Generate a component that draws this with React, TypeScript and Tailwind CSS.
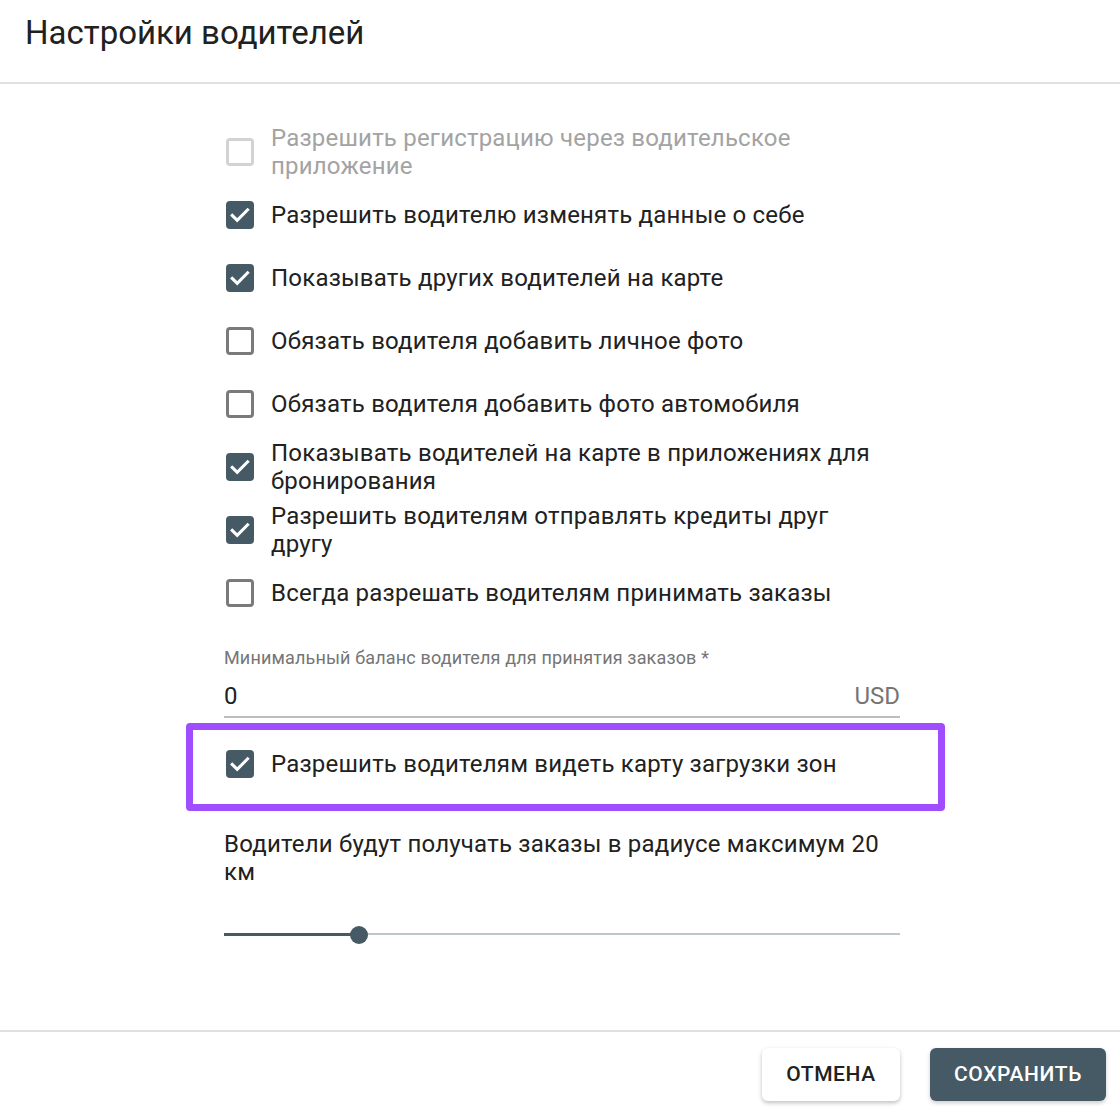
import React from 'react'

const options = [
  { label: 'Разрешить регистрацию через водительское приложение', checked: false, disabled: true },
  { label: 'Разрешить водителю изменять данные о себе', checked: true },
  { label: 'Показывать других водителей на карте', checked: true },
  { label: 'Обязать водителя добавить личное фото', checked: false },
  { label: 'Обязать водителя добавить фото автомобиля', checked: false },
  { label: 'Показывать водителей на карте в приложениях для бронирования', checked: true },
  { label: 'Разрешить водителям отправлять кредиты друг другу', checked: true },
  { label: 'Всегда разрешать водителям принимать заказы', checked: false },
]

function Box({ checked, disabled }: { checked: boolean; disabled?: boolean }) {
  if (checked) {
    return (
      <span className="flex h-[28px] w-[28px] shrink-0 items-center justify-center rounded-[4px] bg-[#455a64]">
        <svg width="24" height="24" viewBox="0 0 24 24" fill="none">
          <path d="M4.2 12.4l5 5 10.4-10.6" stroke="#fff" strokeWidth="3" strokeLinecap="square" strokeLinejoin="miter" />
        </svg>
      </span>
    )
  }
  return (
    <span
      className={
        disabled
          ? 'h-[28px] w-[28px] shrink-0 rounded-[4px] border-[3px] border-[#d3d3d3]'
          : 'h-[28px] w-[28px] shrink-0 rounded-[4px] border-[3px] border-[#7a7a7a]'
      }
    />
  )
}

function Option({ label, checked, disabled }: { label: string; checked: boolean; disabled?: boolean }) {
  return (
    <label className="flex h-[63px] items-center pl-[2px]">
      <Box checked={checked} disabled={disabled} />
      <span
        className={
          'ml-[17px] max-w-[610px] text-[24px] leading-[28px] tracking-[0.2px] ' +
          (disabled ? 'text-[#a3a3a3]' : 'text-[#212121]')
        }
      >
        {label}
      </span>
    </label>
  )
}

export default function App() {
  return (
    <div className="flex h-[1114px] flex-col bg-white font-['Roboto',sans-serif] text-[#212121]">
      <header className="flex h-[84px] shrink-0 items-start border-b-2 border-[#e0e0e0] pl-[25px] pt-[11px]">
        <h1 className="text-[33px] leading-[44px] font-normal text-[#212121]">Настройки водителей</h1>
      </header>

      <main className="flex-1 px-[224px] pt-[36px]">
        <div className="w-[676px]">
          {options.map((o) => (
            <Option key={o.label} {...o} />
          ))}

          <div className="mt-[24px] text-[18px] leading-[20px] tracking-[0.15px] text-[#757575]">
            Минимальный баланс водителя для принятия заказов *
          </div>
          <div className="mt-[13px] flex items-center justify-between border-b-2 border-[#bdbdbd] pb-[5px] text-[24px] leading-[30px]">
            <span className="text-[#212121]">0</span>
            <span className="text-[#757575]">USD</span>
          </div>

          <div className="ml-[-38px] mr-[-45px] mt-[5px] h-[88px] rounded-[4px] border-[7px] border-[#a04dff] pl-[33px]">
            <label className="flex h-[68px] items-center">
              <Box checked />
              <span className="ml-[17px] text-[24px] leading-[28px] tracking-[0.2px] text-[#212121]">
                Разрешить водителям видеть карту загрузки зон
              </span>
            </label>
          </div>

          <p className="mt-[19px] max-w-[660px] text-[24px] leading-[28px] tracking-[0.2px] text-[#212121]">
            Водители будут получать заказы в радиусе максимум 20 км
          </p>

          <div className="relative mt-[38px] h-[20px]">
            <div className="absolute left-0 right-0 top-[9px] h-[2px] bg-[#bfc6ca]" />
            <div className="absolute left-0 top-[9px] h-[3px] w-[134px] bg-[#455a64]" />
            <div className="absolute left-[126px] top-[2px] h-[18px] w-[18px] rounded-full bg-[#455a64]" />
          </div>
        </div>
      </main>

      <footer className="flex h-[84px] shrink-0 items-start justify-end gap-[30px] border-t-2 border-[#e0e0e0] pr-[14px] pt-[16px]">
        <button className="h-[53px] w-[138px] rounded-[6px] bg-white text-[21px] font-medium tracking-[0.6px] text-[#212121] shadow-[0_2px_4px_rgba(0,0,0,0.25)]">
          ОТМЕНА
        </button>
        <button className="h-[53px] w-[176px] rounded-[6px] bg-[#455a64] text-[21px] font-medium tracking-[0.6px] text-white shadow-[0_2px_4px_rgba(0,0,0,0.2)]">
          СОХРАНИТЬ
        </button>
      </footer>
    </div>
  )
}
